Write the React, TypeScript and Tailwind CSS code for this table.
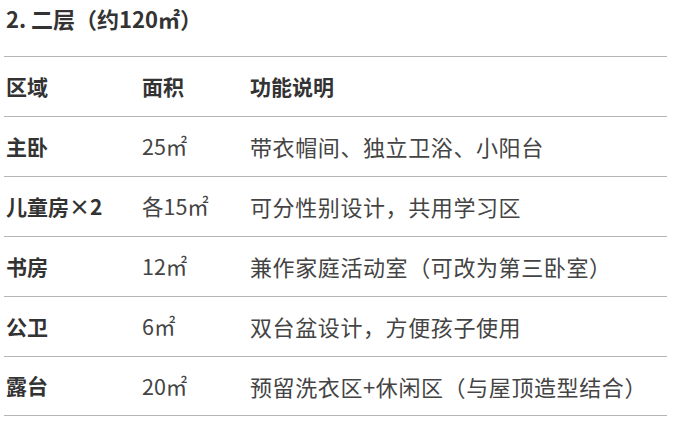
import React from 'react';

const rows = [
  { area: '主卧', size: '25㎡', desc: '带衣帽间、独立卫浴、小阳台' },
  { area: '儿童房×2', size: '各15㎡', desc: '可分性别设计，共用学习区' },
  { area: '书房', size: '12㎡', desc: '兼作家庭活动室（可改为第三卧室）' },
  { area: '公卫', size: '6㎡', desc: '双台盆设计，方便孩子使用' },
  { area: '露台', size: '20㎡', desc: '预留洗衣区+休闲区（与屋顶造型结合）' },
];

const font = { fontFamily: '"Noto Sans CJK SC", "Noto Sans", sans-serif' };

export default function App() {
  return (
    <div className="w-[678px] h-[424px] bg-white overflow-hidden pl-[4px] pr-[11px]" style={font}>
      {/* Title */}
      <div className="h-[56px] pl-[2px] pt-[1px] text-[22px] leading-[34px] font-bold text-[#333]">
        2. 二层（约120㎡）
      </div>

      {/* Table */}
      <div className="flex flex-col">
        <div className="flex items-center h-[60px] border-t-[1.5px] border-[#b5b5b5] pl-[2px] text-[21px] font-bold text-[#333]">
          <div className="w-[136px]">区域</div>
          <div className="w-[108px]">面积</div>
          <div className="flex-1">功能说明</div>
        </div>
        {rows.map((r, i) => (
          <div
            key={r.area}
            className={`flex items-center h-[60px] border-t-[1.5px] border-[#b5b5b5] pl-[2px] ${
              i === rows.length - 1 ? 'border-b-[1.5px]' : ''
            }`}
          >
            <div className="w-[136px] text-[21px] font-bold text-[#333]">{r.area}</div>
            <div className="w-[108px] text-[21.5px] text-[#444]">{r.size}</div>
            <div className="flex-1 text-[22px] tracking-[0.6px] text-[#444] whitespace-nowrap">{r.desc}</div>
          </div>
        ))}
      </div>
    </div>
  );
}
